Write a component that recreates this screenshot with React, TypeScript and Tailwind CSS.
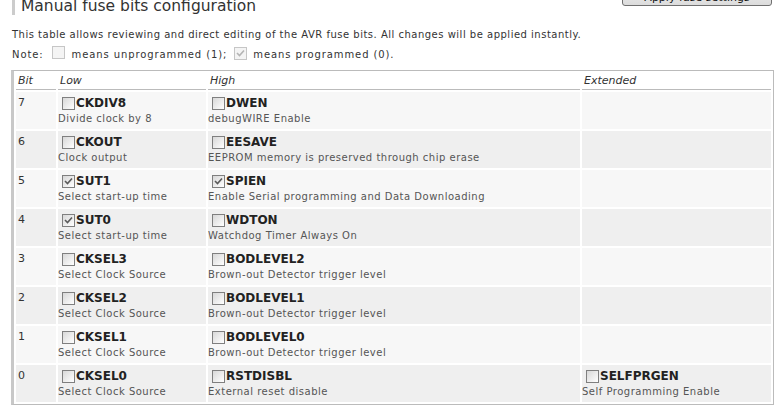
import React from "react"

type Fuse = { name: string; desc: string; checked?: boolean }
type Row = { bit: number; low: Fuse; high: Fuse; ext?: Fuse }

const rows: Row[] = [
  { bit: 7, low: { name: "CKDIV8", desc: "Divide clock by 8" }, high: { name: "DWEN", desc: "debugWIRE Enable" } },
  { bit: 6, low: { name: "CKOUT", desc: "Clock output" }, high: { name: "EESAVE", desc: "EEPROM memory is preserved through chip erase" } },
  { bit: 5, low: { name: "SUT1", desc: "Select start-up time", checked: true }, high: { name: "SPIEN", desc: "Enable Serial programming and Data Downloading", checked: true } },
  { bit: 4, low: { name: "SUT0", desc: "Select start-up time", checked: true }, high: { name: "WDTON", desc: "Watchdog Timer Always On" } },
  { bit: 3, low: { name: "CKSEL3", desc: "Select Clock Source" }, high: { name: "BODLEVEL2", desc: "Brown-out Detector trigger level" } },
  { bit: 2, low: { name: "CKSEL2", desc: "Select Clock Source" }, high: { name: "BODLEVEL1", desc: "Brown-out Detector trigger level" } },
  { bit: 1, low: { name: "CKSEL1", desc: "Select Clock Source" }, high: { name: "BODLEVEL0", desc: "Brown-out Detector trigger level" } },
  {
    bit: 0,
    low: { name: "CKSEL0", desc: "Select Clock Source" },
    high: { name: "RSTDISBL", desc: "External reset disable" },
    ext: { name: "SELFPRGEN", desc: "Self Programming Enable" },
  },
]

function Check({ checked, disabled }: { checked?: boolean; disabled?: boolean }) {
  return (
    <span
      className={
        disabled
          ? "inline-flex w-[13px] h-[13px] shrink-0 border border-[#c6c6c6] bg-[#f4f4f4] items-center justify-center"
          : "inline-flex w-[13px] h-[13px] shrink-0 border border-[#7f7f7f] bg-gradient-to-br from-[#d8d8d8] to-white items-center justify-center"
      }
    >
      {checked && (
        <svg width="9" height="9" viewBox="0 0 9 9">
          <path d="M1 4 L3.5 6.5 L8 1.5" fill="none" stroke={disabled ? "#b4b4b4" : "#5a5a5a"} strokeWidth="1.6" />
        </svg>
      )}
    </span>
  )
}

function FuseCell({ fuse }: { fuse: Fuse }) {
  return (
    <div className="flex flex-col">
      <label className="flex items-center gap-[1px] pl-[4px] pt-[3px]">
        <Check checked={fuse.checked} />
        <span className="text-[12px] font-bold text-[#222] leading-[16px]">{fuse.name}</span>
      </label>
      <span className="text-[10px] tracking-[0.5px] text-[#555] leading-[14px] pt-[1px] whitespace-nowrap">{fuse.desc}</span>
    </div>
  )
}

export default function App() {
  return (
    <div className="w-[778px] h-[407px] overflow-hidden bg-white text-[#333]" style={{ fontFamily: '"DejaVu Sans", Verdana, sans-serif' }}>
      <div className="flex justify-between items-start">
        <h2 className="ml-3 mt-[-3px] border-l-[3px] border-[#cccccc] pl-[6px] text-[15.5px] leading-[18px] text-[#333] font-normal">
          Manual fuse bits configuration
        </h2>
        <button className="mr-[6px] mt-[-16px] w-[150px] h-[22px] rounded-[3px] border border-[#707070] bg-gradient-to-b from-[#f2f2f2] to-[#dcdcdc] text-[11px] leading-[14px] pt-[5px] text-[#111]">
          Apply fuse settings
        </button>
      </div>

      <p className="ml-3 mt-[13px] text-[10px] tracking-[0.5px] leading-[14px] text-[#333]">
        This table allows reviewing and direct editing of the AVR fuse bits. All changes will be applied instantly.
      </p>
      <p className="ml-3 mt-[4px] flex items-center text-[10px] tracking-[0.9px] leading-[14px] text-[#333]">
        <span>Note:</span>
        <span className="ml-[8px]"><Check disabled /></span>
        <span className="ml-[7px]">means unprogrammed (1);</span>
        <span className="ml-[7px]"><Check checked disabled /></span>
        <span className="ml-[6px]">means programmed (0).</span>
      </p>

      <table className="ml-[11px] mt-[7px] w-[763px] border-separate border-spacing-[2px] border border-[#bbbbbb] border-l-[3px] border-l-[#c8c8c8] table-fixed">
        <colgroup>
          <col className="w-[40px]" />
          <col className="w-[148px]" />
          <col className="w-[372px]" />
          <col />
        </colgroup>
        <thead>
          <tr className="text-left">
            {["Bit", "Low", "High", "Extended"].map((h) => (
              <th key={h} className="font-normal italic text-[11px] leading-[14px] text-[#333] px-[2px] pt-[1px] pb-[1px] border-b border-[#bbbbbb]">
                {h}
              </th>
            ))}
          </tr>
        </thead>
        <tbody>
          {rows.map((r, i) => {
            const bg = i % 2 === 0 ? "bg-[#f7f7f7]" : "bg-[#efefef]"
            return (
              <tr key={r.bit} className="h-[37px] align-top">
                <td className={`${bg} px-[2px] pt-[4px] text-[11px] leading-[14px] text-[#333]`}>{r.bit}</td>
                <td className={`${bg} px-0`}>
                  <FuseCell fuse={r.low} />
                </td>
                <td className={`${bg} px-0`}>
                  <FuseCell fuse={r.high} />
                </td>
                <td className={`${bg} px-0`}>{r.ext && <FuseCell fuse={r.ext} />}</td>
              </tr>
            )
          })}
        </tbody>
      </table>
    </div>
  )
}
